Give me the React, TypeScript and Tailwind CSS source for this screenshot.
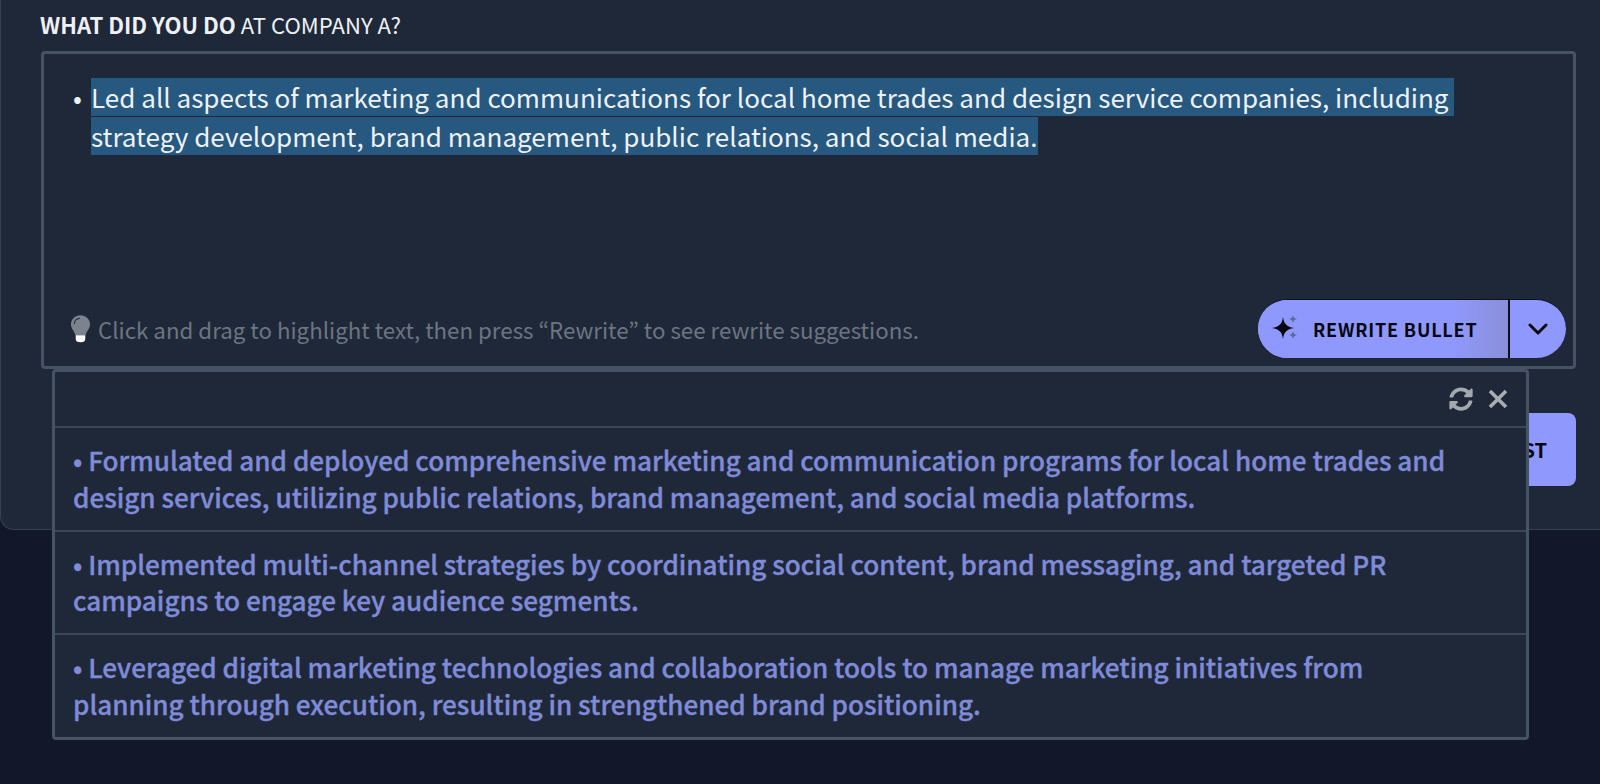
const font = { fontFamily: '"Noto Sans CJK JP", "Noto Sans", sans-serif' };

const suggestions = [
  "• Formulated and deployed comprehensive marketing and communication programs for local home trades and design services, utilizing public relations, brand management, and social media platforms.",
  "• Implemented multi-channel strategies by coordinating social content, brand messaging, and targeted PR campaigns to engage key audience segments.",
  "• Leveraged digital marketing technologies and collaboration tools to manage marketing initiatives from planning through execution, resulting in strengthened brand positioning.",
];

function Sparkle() {
  return (
    <svg width="26" height="28" viewBox="0 0 26 28" className="shrink-0">
      <path d="M11 2 C12 9 14.500 11.500 22 13 C14.500 14.500 12 17 11 24 C10 17 7.500 14.500 0 13 C7.500 11.500 10 9 11 2Z" fill="#06070f" />
      <path d="M21 0 C21.400 2.400 22.400 3.400 25 4 C22.400 4.600 21.400 5.600 21 8 C20.600 5.600 19.600 4.600 17 4 C19.600 3.400 20.600 2.400 21 0Z" fill="#5f6596" />
      <path d="M21 16 C21.400 18.400 22.400 19.400 25 20 C22.400 20.600 21.400 21.600 21 24 C20.600 21.600 19.600 20.600 17 20 C19.600 19.400 20.600 18.400 21 16Z" fill="#5f6596" />
    </svg>
  );
}

function Bulb() {
  return (
    <svg width="21" height="29" viewBox="0 0 22 30" className="mb-[3px] shrink-0">
      <path d="M11 1 C5.500 1 1 5.300 1 10.600 C1 15.500 4.600 17.400 5.600 22 L16.400 22 C17.400 17.400 21 15.500 21 10.600 C21 5.300 16.500 1 11 1Z" fill="#7d838e" />
      <path d="M4.500 10 C4.800 6.800 7.200 4.600 10 4.400" fill="none" stroke="#2b3444" strokeWidth="1.200" strokeLinecap="round" />
      <path d="M6 22 L16 22 L16 26 C16 28 14.500 29.500 11 29.500 C7.500 29.500 6 28 6 26Z" fill="#ffffff" />
    </svg>
  );
}

function Refresh() {
  return (
    <svg width="24" height="24" viewBox="0 0 512 512" fill="#a3a8af">
      <path d="M370.7 133.3C339.5 104 298.9 88 255.8 88c-77.5 0-144.3 53.100-162.800 126.900-1.300 5.400-6.100 9.100-11.600 9.100H24.100c-7.500 0-13.200-6.800-11.800-14.200C33.900 94.900 134.800 8 256 8c66.400 0 126.800 26.100 171.300 68.700L463 41C478.100 25.900 504 36.600 504 57.900V192c0 13.300-10.700 24-24 24H345.900c-21.400 0-32.100-25.900-17-41l41.800-41.700zM32 296h134.100c21.400 0 32.100 25.900 17 41l-41.800 41.800c31.300 29.300 71.800 45.300 114.900 45.200 77.400-.1 144.300-53.100 162.800-126.800 1.300-5.400 6.100-9.100 11.600-9.100h57.300c7.500 0 13.200 6.800 11.800 14.200C478.100 417.100 377.200 504 256 504c-66.400 0-126.800-26.100-171.300-68.700L49 471C33.900 486.100 8 475.400 8 454.100V320c0-13.300 10.700-24 24-24z" />
    </svg>
  );
}

export default function App() {
  return (
    <div className="relative h-[784px] w-[1600px] overflow-hidden bg-[#121829]" style={font}>
      <div className="h-[530px] rounded-bl-[14px] border-b border-l border-[#364254] bg-[#1f2839] pl-[39px] pr-[24px] pt-[8px]">
        <div className="h-[43px] text-[22.100px] leading-[32px] text-[#eef0f3]">
          <span className="font-bold">WHAT DID YOU DO</span> AT COMPANY A?
        </div>
        <div className="ml-[1px] flex h-[318px] flex-col justify-between rounded-[4px] border-[3px] border-[#465364] pb-[8px] pl-[29px] pr-[7px] pt-[24px]">
          <div className="flex text-[26.050px] leading-[39px] text-[#eef2f6]">
            <span className="w-[18px] shrink-0">•</span>
            <span>
              <span className="bg-[#27587f]">Led all aspects of marketing and communications for local home trades and design service companies, including&nbsp;</span>
              <br />
              <span className="bg-[#27587f]">strategy development, brand management, public relations, and social media.</span>
            </span>
          </div>
          <div className="-ml-[3px] flex items-center justify-between">
            <div className="flex items-center gap-[7px] pt-[2px] text-[22.300px] text-[#6c7581]">
              <Bulb />
              <span>Click and drag to highlight text, then press “Rewrite” to see rewrite suggestions.</span>
            </div>
            <div className="flex h-[59px] w-[308px] overflow-hidden rounded-full border-t border-[#0c0f1c] bg-[#8f98fc]">
              <div className="flex w-[250px] items-center gap-[15px] bg-gradient-to-r from-[#8f98fc] from-[78%] to-[#8b8fd9] pl-[14px] text-[18px] font-bold tracking-[0.800px] text-[#06070f]">
                <Sparkle />
                <span>REWRITE BULLET</span>
              </div>
              <div className="flex flex-1 items-center justify-center border-l-2 border-[#0c0f1c]">
                <svg width="20" height="12" viewBox="0 0 20 12" fill="none" stroke="#06070f" strokeWidth="2.900" strokeLinecap="round" strokeLinejoin="round">
                  <path d="M2 2 L10 10 L18 2" />
                </svg>
              </div>
            </div>
          </div>
        </div>
        <div className="mt-[44px] flex justify-end">
          <div className="flex h-[73px] w-[120px] items-center justify-end rounded-[8px] bg-[#8f98fc] pr-[29px] text-[20px] font-bold text-[#06070f]">ST</div>
        </div>
      </div>

      <div className="absolute left-[52px] top-[369px] w-[1477px] rounded-[4px] border-[3px] border-[#465364] bg-[#1f2839]">
        <div className="flex h-[54px] items-center justify-end gap-[14px] pr-[17px]">
          <Refresh />
          <svg width="22" height="22" viewBox="0 0 22 22" fill="none" stroke="#a9adb2" strokeWidth="3.600">
            <path d="M3 3 L19 19 M19 3 L3 19" />
          </svg>
        </div>
        {suggestions.map((s) => (
          <div key={s} className="h-[103.500px] border-t-2 border-[#3b4757] pl-[18px] pr-[70px] pt-[14px] text-[26.100px] font-medium leading-[36.500px] text-[#7f8bd8] [-webkit-text-stroke:0.35px_#7f8bd8]">
            {s}
          </div>
        ))}
      </div>
    </div>
  );
}
